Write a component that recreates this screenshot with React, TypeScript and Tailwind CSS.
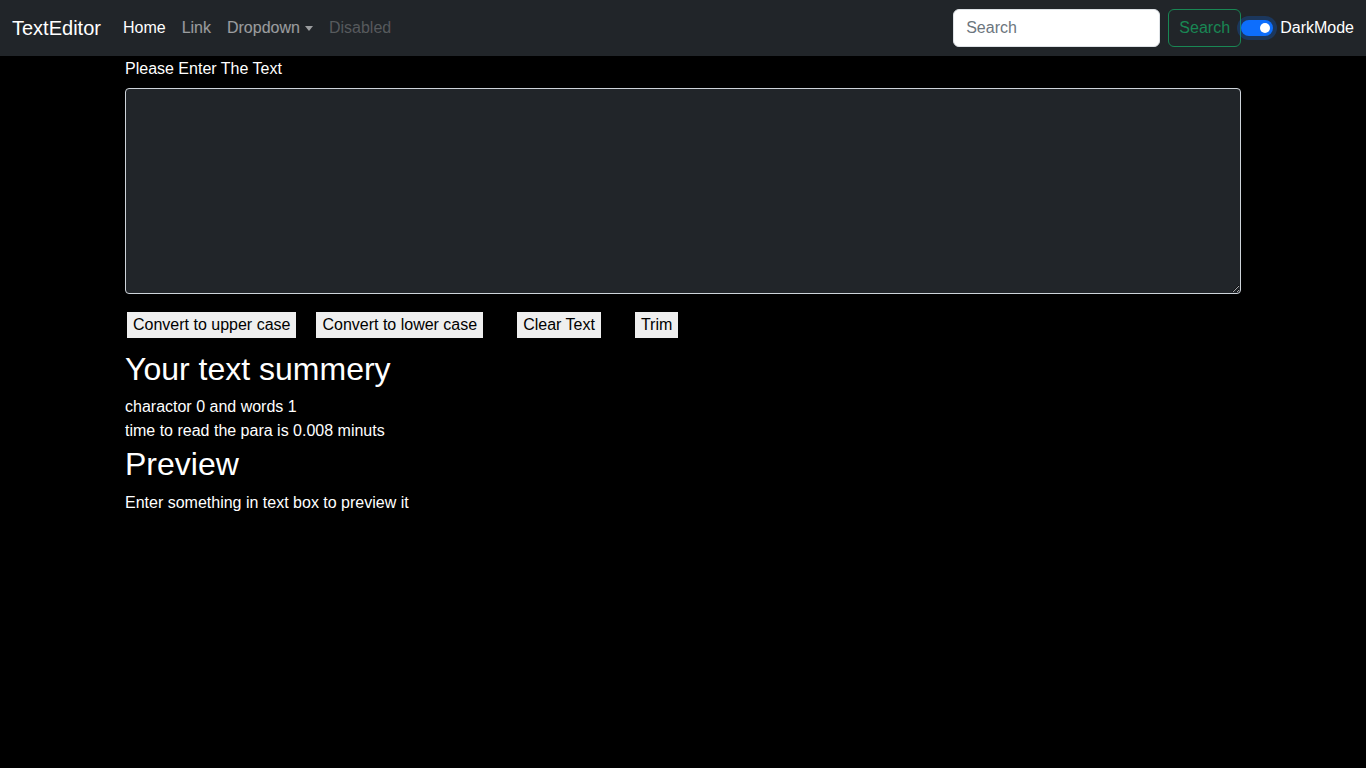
import { useState } from 'react'

export default function App() {
	const [text, setText] = useState('')

	const words = text.split(' ').length
	const font = { fontFamily: '"Liberation Sans", Arial, sans-serif' }

	return (
		<div className="min-h-screen bg-black text-white" style={font}>
			<nav className="h-14 bg-[#212529] flex items-center justify-between px-3">
				<div className="flex items-center">
					<a className="text-[20px] text-white mr-[14px]">TextEditor</a>
					<ul className="flex items-center text-[16px]">
						<li className="px-2 text-white">Home</li>
						<li className="px-2 text-white/55">Link</li>
						<li className="px-2 text-white/55 flex items-center">
							Dropdown
							<span className="ml-[5px] inline-block w-0 h-0 border-x-[4px] border-x-transparent border-t-[5px] border-t-white/55" />
						</li>
						<li className="px-2 text-white/25">Disabled</li>
					</ul>
				</div>
				<div className="flex items-center">
					<input
						className="w-[207px] h-[38px] rounded-[6px] bg-white border border-[#dee2e6] px-3 text-[16px] text-[#212529] placeholder:text-[#6c757d] outline-none"
						placeholder="Search"
					/>
					<button className="ml-2 h-[38px] w-[73px] rounded-[6px] border border-[#198754] text-[#198754] text-[16px]">
						Search
					</button>
					<div className="flex items-center">
						<span className="relative w-8 h-4 rounded-full bg-[#0d6efd] shadow-[0_0_0_4px_rgba(13,110,253,0.25)]">
							<span className="absolute right-[3px] top-[3px] w-[10px] h-[10px] rounded-full bg-white" />
						</span>
						<span className="ml-[7px] text-[16px] text-white">DarkMode</span>
					</div>
				</div>
			</nav>

			<div className="w-[1116px] mx-auto">
				<label className="block pt-[1px] text-[16px] leading-6 mb-[7px]">Please Enter The Text</label>
				<textarea
					value={text}
					onChange={(e) => setText(e.target.value)}
					className="block w-full h-[206px] bg-[#212529] border border-[#ced4da] rounded-[4px] text-white p-3 outline-none"
				/>
				<div className="flex items-center mt-[18px] text-[16px] text-black">
					<button className="ml-[2px] h-[26px] px-[6px] bg-[#efefef]">Convert to upper case</button>
					<button className="ml-[20px] h-[26px] px-[6px] bg-[#efefef]">Convert to lower case</button>
					<button className="ml-[34px] h-[26px] px-[6px] bg-[#efefef]">Clear Text</button>
					<button className="ml-[34px] h-[26px] px-[6px] bg-[#efefef]">Trim</button>
				</div>
				<h2 className="mt-[12px] text-[32px] leading-[38px] font-medium">Your text summery</h2>
				<p className="mt-[7px] text-[16px] leading-6">charactor {text.length} and words {words}</p>
				<p className="text-[16px] leading-6">time to read the para is {0.008 * words} minuts</p>
				<h2 className="mt-[2px] text-[32px] leading-[38px] font-medium">Preview</h2>
				<p className="mt-[8px] text-[16px] leading-6">
					{text.length > 0 ? text : 'Enter something in text box to preview it'}
				</p>
			</div>
		</div>
	)
}
